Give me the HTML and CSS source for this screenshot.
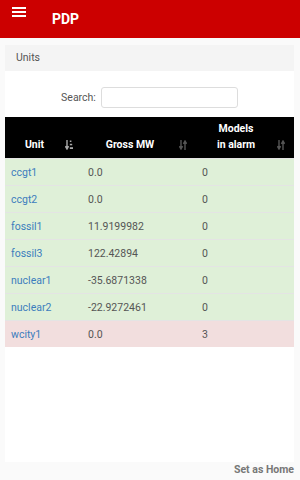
FILE: index.html
```html
<!DOCTYPE html>
<html lang="en">
<head>
  <meta charset="UTF-8">
  <meta name="viewport" content="width=device-width, initial-scale=1.0">
  <title>PDP</title>
  <link rel="stylesheet" href="styles.css">
</head>
<body>
  <header class="topbar">
    <span class="menu-btn">
      <svg width="14" height="10" viewBox="0 0 14 10"><rect y="0" width="14" height="2" fill="#fff"/><rect y="4" width="14" height="2" fill="#fff"/><rect y="8" width="14" height="2" fill="#fff"/></svg>
    </span>
    <span class="brand">PDP</span>
  </header>

  <main class="content">
    <div class="panel">
      <div class="panel-heading">Units</div>

      <div class="search-row">
        <label for="search">Search:</label>
        <input id="search" type="text">
      </div>

      <table class="units">
        <colgroup>
          <col class="c1"><col class="c2"><col class="c3">
        </colgroup>
        <thead>
          <tr>
            <th>Unit
              <svg class="sort" width="8" height="10" viewBox="0 0 8 10"><path d="M2 0v8M0.4 6.2L2 9l1.6-2.8" stroke="#aaa" stroke-width="1.4" fill="none"/><rect x="4.8" y="0.5" width="1.6" height="1.5" fill="#aaa"/><rect x="4.8" y="3.8" width="2.4" height="1.5" fill="#aaa"/><rect x="4.8" y="7.2" width="3.2" height="1.8" fill="#aaa"/></svg>
            </th>
            <th>Gross MW
              <svg class="sort" width="8" height="10" viewBox="0 0 8 10"><path d="M2 0v8M0.4 6.2L2 9l1.6-2.8M6 10V2M4.4 3.8L6 1l1.6 2.8" stroke="#555" stroke-width="1.4" fill="none"/></svg>
            </th>
            <th>Models<br>in alarm
              <svg class="sort" width="8" height="10" viewBox="0 0 8 10"><path d="M2 0v8M0.4 6.2L2 9l1.6-2.8M6 10V2M4.4 3.8L6 1l1.6 2.8" stroke="#555" stroke-width="1.4" fill="none"/></svg>
            </th>
          </tr>
        </thead>
        <tbody>
          <tr class="ok"><td><a href="#">ccgt1</a></td><td>0.0</td><td>0</td></tr>
          <tr class="ok"><td><a href="#">ccgt2</a></td><td>0.0</td><td>0</td></tr>
          <tr class="ok"><td><a href="#">fossil1</a></td><td>11.9199982</td><td>0</td></tr>
          <tr class="ok"><td><a href="#">fossil3</a></td><td>122.42894</td><td>0</td></tr>
          <tr class="ok"><td><a href="#">nuclear1</a></td><td>-35.6871338</td><td>0</td></tr>
          <tr class="ok"><td><a href="#">nuclear2</a></td><td>-22.9272461</td><td>0</td></tr>
          <tr class="alarm"><td><a href="#">wcity1</a></td><td>0.0</td><td>3</td></tr>
        </tbody>
      </table>
    </div>

    <div class="footer-link">Set as Home</div>
  </main>
</body>
</html>
```

FILE: styles.css
```css
body {
  margin: 0;
  font-family: Roboto, "Liberation Sans", sans-serif;
  font-size: 10.5px;
  color: #555;
  background: #fafafa;
}

.topbar {
  height: 38px;
  background: #cc0000;
  display: flex;
  align-items: flex-start;
}

.menu-btn {
  margin: 7px 0 0 12px;
  line-height: 0;
}

.brand {
  margin: 11px 0 0 26px;
  color: #fff;
  font-size: 14px;
  font-weight: bold;
  line-height: 16px;
}

.content {
  padding: 7px 6px 0 5px;
}

.panel {
  background: #fff;
  min-height: 417px;
}

.panel-heading {
  height: 26px;
  line-height: 26px;
  padding-left: 11px;
  background: #f4f4f4;
  color: #555;
}

.search-row {
  display: flex;
  justify-content: center;
  align-items: center;
  gap: 5px;
  padding: 16px 0 9px;
}

.search-row label {
  color: #555;
}

.search-row input {
  width: 137px;
  height: 21px;
  box-sizing: border-box;
  border: 1px solid #ddd;
  border-radius: 3px;
  margin: 0;
}

.units {
  width: 100%;
  border-collapse: collapse;
  table-layout: fixed;
}

.c1 { width: 77px; }
.c2 { width: 114px; }
.c3 { width: 98px; }

.units th {
  position: relative;
  background: #000;
  color: #fff;
  font-weight: bold;
  text-align: center;
  vertical-align: bottom;
  line-height: 16px;
  padding: 4px 24px 5px 6px;
}

.units th .sort {
  position: absolute;
  right: 9px;
  bottom: 8px;
}

.units td {
  padding: 6px 6px 5px;
  line-height: 15px;
  border-top: 1px solid #e4e4e4;
  color: #555;
  white-space: nowrap;
}

.units tr.ok td {
  background: #dff0d8;
}

.units tr.alarm td {
  background: #f2dede;
}

.units a {
  color: #3c7dbd;
  text-decoration: none;
}

.footer-link {
  text-align: right;
  font-weight: bold;
  color: #777;
  line-height: 16px;
}
```
